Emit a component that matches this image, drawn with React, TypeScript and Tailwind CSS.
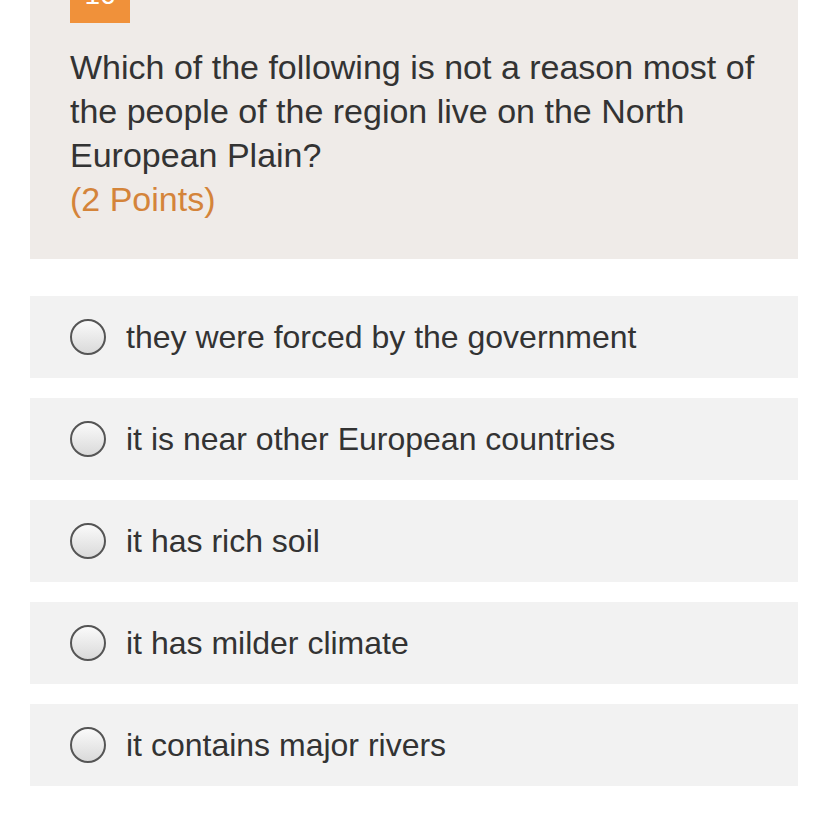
const options = [
  'they were forced by the government',
  'it is near other European countries',
  'it has rich soil',
  'it has milder climate',
  'it contains major rivers',
];

function Radio() {
  return (
    <span className="h-[36px] w-[36px] shrink-0 rounded-full border-2 border-[#555555] bg-gradient-to-b from-[#fafafa] to-[#dadada]" />
  );
}

export default function App() {
  return (
    <div
      className="min-h-[828px] bg-white px-[30px] text-[#333333]"
      style={{ fontFamily: '"Liberation Sans", Arial, sans-serif' }}
    >
      <div className="-mt-[40px] bg-[#efebe8] px-[40px] pb-[38px]">
        <div className="flex h-[63px] w-[60px] items-center justify-center bg-[#f0913a] pt-[6px] text-[28px] text-white">
          16
        </div>
        <div className="mt-[22px] text-[34px] leading-[44px]">
          Which of the following is not a reason most of the people of the region live on the North European Plain?
          <div className="text-[#d4843a]">(2 Points)</div>
        </div>
      </div>
      <div className="mt-[37px] flex flex-col gap-[20px]">
        {options.map((o) => (
          <div key={o} className="flex h-[82px] items-center gap-[20px] bg-[#f2f2f2] px-[40px]">
            <Radio />
            <span className="text-[32px]">{o}</span>
          </div>
        ))}
      </div>
    </div>
  );
}
